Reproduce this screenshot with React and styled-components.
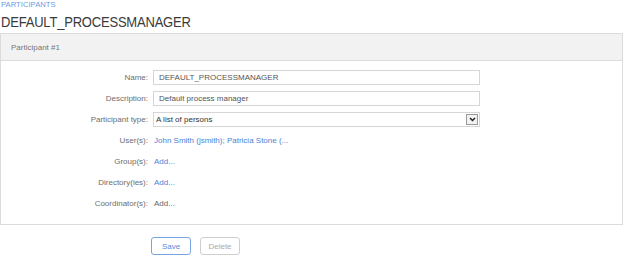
import React from "react";
import styled, { createGlobalStyle } from "styled-components";

const Global = createGlobalStyle`
  html, body { margin: 0; padding: 0; background: #fff; }
  body { font-family: "Liberation Sans", Arial, sans-serif; color: #333; }
`;

const Page = styled.div`
  width: 623px;
  padding-top: 1px;
`;

const Breadcrumb = styled.div`
  font-size: 7.7px;
  line-height: 8px;
  color: #6f9be0;
  padding-left: 1px;
`;

const Title = styled.h1`
  margin: 3px 0 0 1px;
  font-size: 13px;
  line-height: 17px;
  font-weight: normal;
  color: #3a3a3a;
  letter-spacing: -0.2px;
  transform: scaleY(1.15);
  transform-origin: top left;
`;

const Panel = styled.section`
  margin-top: 4px;
  border: 1px solid #dcdcdc;
`;

const PanelHeader = styled.div`
  height: 26px;
  background: #f2f2f2;
  border-bottom: 1px solid #dcdcdc;
  display: flex;
  align-items: center;
  padding-left: 10px;
  font-size: 8px;
  color: #777;
`;

const Form = styled.div`
  display: grid;
  grid-template-columns: 147px 327px;
  column-gap: 5px;
  row-gap: 6px;
  grid-auto-rows: 15px;
  padding: 9px 0 13px 0;
  font-size: 8px;
`;

const Label = styled.div`
  text-align: right;
  color: #6e6e6e;
  align-self: center;
`;

const Field = styled.div`
  box-sizing: border-box;
  height: 15px;
  border: 1px solid #d6d6d6;
  display: flex;
  align-items: center;
  padding-left: 5px;
  color: #555;
  background: #fff;
`;

const SelectBox = styled(Field)`
  justify-content: space-between;
  padding-left: 2px;
  padding-right: 1px;
  color: #333;
`;

const DropBtn = styled.div`
  box-sizing: border-box;
  width: 12px;
  height: 11px;
  border: 1px solid #999;
  background: #f2f2f2;
  display: flex;
  align-items: center;
  justify-content: center;
`;

const Value = styled.div`
  align-self: center;
  color: ${(p) => (p.$link ? "#4f82d6" : "#666")};
  padding-left: 1px;
`;

const Buttons = styled.div`
  display: flex;
  gap: 9px;
  margin: 12px 0 0 151px;
`;

const Button = styled.button`
  box-sizing: border-box;
  width: 40px;
  height: 18px;
  border-radius: 3px;
  background: #fff;
  font-family: "Liberation Sans", Arial, sans-serif;
  font-size: 8px;
  padding: 0;
  border: 1px solid ${(p) => (p.$primary ? "#7aa3e3" : "#cfcfcf")};
  color: ${(p) => (p.$primary ? "#5a8ad8" : "#aaa")};
`;

export default function App() {
  return (
    <Page>
      <Global />
      <Breadcrumb>PARTICIPANTS</Breadcrumb>
      <Title>DEFAULT_PROCESSMANAGER</Title>
      <Panel>
        <PanelHeader>Participant #1</PanelHeader>
        <Form>
          <Label>Name:</Label>
          <Field>DEFAULT_PROCESSMANAGER</Field>
          <Label>Description:</Label>
          <Field>Default process manager</Field>
          <Label>Participant type:</Label>
          <SelectBox>
            <span>A list of persons</span>
            <DropBtn>
              <svg width="7" height="5" viewBox="0 0 7 5">
                <path d="M1 1 L3.5 3.5 L6 1" fill="none" stroke="#222" strokeWidth="1.5" />
              </svg>
            </DropBtn>
          </SelectBox>
          <Label>User(s):</Label>
          <Value $link>John Smith (jsmith); Patricia Stone (...</Value>
          <Label>Group(s):</Label>
          <Value $link>Add...</Value>
          <Label>Directory(ies):</Label>
          <Value $link>Add...</Value>
          <Label>Coordinator(s):</Label>
          <Value>Add...</Value>
        </Form>
      </Panel>
      <Buttons>
        <Button $primary>Save</Button>
        <Button>Delete</Button>
      </Buttons>
    </Page>
  );
}
